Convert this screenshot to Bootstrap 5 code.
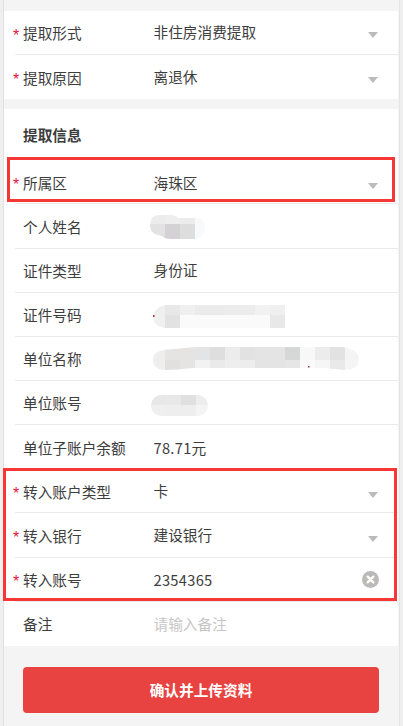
<!DOCTYPE html>
<html lang="zh-CN">
<head>
<meta charset="utf-8">
<title>提取信息</title>
<link rel="stylesheet" href="https://cdn.jsdelivr.net/npm/bootstrap@5.3.0/dist/css/bootstrap.min.css">
<style>
html, body { height: 100%; margin: 0; background: #efefef; overflow: hidden; }
body { font-family: "Noto Sans CJK SC", "Liberation Sans", sans-serif; font-size: 14.67px; color: #3d3d3d; }
.shell { width: 397px; height: 726px; margin-left: 3px; background: #f4f4f4; border-left: 1px solid #e0e0e0; border-right: 1px solid #e4e4e4; }
.panel-top { padding-top: 11px; }
.sheet { background: #fff; width: 394px; }
.sheet + .sheet { margin-top: 10px; }
.heading-row { height: 51px; padding-left: 19px; font-weight: 700; line-height: 51px; }
.field { height: 44.15px; margin-left: 11px; padding-left: 8px; border-bottom: 1px solid #e9e9e9; line-height: 1; }
.field.last-one { border-bottom: 0; }
.mark-star { width: 10px; margin-left: -10px; color: #e5133c; font-family: "Liberation Sans", sans-serif; font-size: 16px; line-height: 1; padding-top: 6px; }
.field-name { width: 130.5px; flex: none; padding-top: 2px; }
.name-low { padding-top: 4px; }
.field-value { flex: 1 1 auto; min-width: 0; }
.value-down { padding-top: 2px; }
.value-low { padding-top: 4px; }
.num-value { letter-spacing: .3px; }
.hint-value { color: #c6c6c6; }
.drop-arrow { width: 0; height: 0; margin-right: 20px; margin-top: 5px; border-left: 5px solid transparent; border-right: 5px solid transparent; border-top: 6px solid #bbb; }
.arrow-far { margin-top: 9px; }
.arrow-mid { margin-top: 8px; }
.clear-btn { width: 17px; height: 17px; margin-right: 19px; display: block; margin-top: 1px; }
.smudge { display: block; }
.smudge-name { margin-left: -4px; margin-top: 3px; }
.smudge-id { margin-left: -1px; margin-top: 4px; }
.smudge-org { margin-left: -1px; margin-top: -1px; }
.smudge-acct { margin-left: -3px; margin-top: 6px; }
.annot-wrap { position: relative; }
.annot { position: absolute; border: 3px solid #f73636; pointer-events: none; }
.annot-one { left: 3px; right: 3px; top: -3px; height: 45px; }
.annot-two { left: -1px; right: 1px; top: -1px; height: 133px; }
.foot-zone { padding: 21px 19px 0; }
.go-btn { height: 46px; width: 356px; background: #e84340; border: 0; border-radius: 4px; color: #fff; font-size: 14.67px; font-weight: 700; padding: 0; }
.go-btn:hover { background: #e84340; color: #fff; }
</style>
</head>
<body>
<div class="shell panel-top">
  <div class="sheet">
    <div class="field d-flex align-items-center">
      <span class="mark-star">*</span><span class="field-name">提取形式</span>
      <span class="field-value">非住房消费提取</span><span class="drop-arrow"></span>
    </div>
    <div class="field last-one d-flex align-items-center">
      <span class="mark-star">*</span><span class="field-name">提取原因</span>
      <span class="field-value">离退休</span><span class="drop-arrow"></span>
    </div>
  </div>
  <div class="sheet">
    <div class="heading-row">提取信息</div>
    <div class="annot-wrap">
      <div class="field d-flex align-items-center">
        <span class="mark-star">*</span><span class="field-name">所属区</span>
        <span class="field-value value-down">海珠区</span><span class="drop-arrow arrow-far"></span>
      </div>
      <div class="annot annot-one"></div>
    </div>
    <div class="field d-flex align-items-center">
      <span class="field-name">个人姓名</span>
      <span class="field-value">
        <svg class="smudge smudge-name" width="55" height="24" viewBox="0 0 55 24" aria-hidden="true">
          <defs><clipPath id="c1"><path d="M9 0H20Q26 0 28 3H45Q55 3 55 12Q55 22 45 24H22Q14 24 12 21Q0 19 0 11Q0 0 9 0Z"/></clipPath></defs>
          <g clip-path="url(#c1)">
            <rect x="0" y="0" width="15" height="9" fill="#ececec"/><rect x="15" y="0" width="15" height="9" fill="#eeeeee"/><rect x="30" y="0" width="15" height="9" fill="#ececec"/><rect x="45" y="0" width="10" height="9" fill="#f9f9fb"/>
            <rect x="0" y="9" width="15" height="15" fill="#e2e2e2"/><rect x="15" y="9" width="15" height="15" fill="#d4d2d4"/><rect x="30" y="9" width="15" height="15" fill="#dcdddc"/><rect x="45" y="9" width="10" height="15" fill="#f8f9fb"/>
          </g>
        </svg>
      </span>
    </div>
    <div class="field d-flex align-items-center">
      <span class="field-name">证件类型</span>
      <span class="field-value">身份证</span>
    </div>
    <div class="field d-flex align-items-center">
      <span class="field-name">证件号码</span>
      <span class="field-value">
        <svg class="smudge smudge-id" width="132" height="24" viewBox="0 0 132 24" aria-hidden="true">
          <defs><clipPath id="c2"><path d="M12 1H132V24H12Q0 22 0 12Q2 3 12 1Z"/></clipPath></defs>
          <g clip-path="url(#c2)">
            <rect x="0" y="0" width="12" height="11" fill="#efefef"/><rect x="12" y="0" width="15" height="11" fill="#e8e8e8"/><rect x="27" y="0" width="15" height="11" fill="#efefef"/><rect x="42" y="0" width="30" height="11" fill="#ebebeb"/><rect x="72" y="0" width="30" height="11" fill="#ececec"/><rect x="102" y="0" width="15" height="11" fill="#f2f2f2"/><rect x="117" y="0" width="15" height="11" fill="#efefef"/>
            <rect x="0" y="11" width="12" height="13" fill="#f0f0f0"/><rect x="12" y="11" width="15" height="13" fill="#e2e2e2"/><rect x="27" y="11" width="90" height="13" fill="#fafafa"/><rect x="117" y="11" width="15" height="13" fill="#e8e8e8"/>
          </g>
          <rect x="0" y="11" width="1.5" height="2" fill="#a33"/>
        </svg>
      </span>
    </div>
    <div class="field d-flex align-items-center">
      <span class="field-name">单位名称</span>
      <span class="field-value">
        <svg class="smudge smudge-org" width="206" height="24" viewBox="0 0 206 24" aria-hidden="true">
          <defs><clipPath id="c3"><path d="M10 4Q20 3 42 1H190Q206 3 206 15Q204 24 192 24L170 22H40Q24 24 10 24Q0 22 0 14Q0 6 10 4Z"/></clipPath></defs>
          <g clip-path="url(#c3)">
            <rect x="0" y="0" width="12" height="14" fill="#eeeeee"/><rect x="12" y="0" width="15" height="14" fill="#e6e4e3"/><rect x="27" y="0" width="15" height="14" fill="#e6e4e3"/><rect x="42" y="0" width="15" height="14" fill="#e3e4e6"/><rect x="57" y="0" width="15" height="14" fill="#dedede"/><rect x="72" y="0" width="15" height="14" fill="#ececec"/><rect x="87" y="0" width="15" height="14" fill="#e2e2e2"/><rect x="102" y="0" width="30" height="14" fill="#e4e4e4"/><rect x="132" y="0" width="15" height="14" fill="#d6d8d8"/><rect x="147" y="0" width="15" height="14" fill="#f8f8f8"/><rect x="162" y="0" width="15" height="14" fill="#ececec"/><rect x="177" y="0" width="15" height="14" fill="#e2e2e2"/><rect x="192" y="0" width="14" height="14" fill="#f4f4f4"/>
            <rect x="0" y="14" width="12" height="10" fill="#eeeeee"/><rect x="12" y="14" width="15" height="10" fill="#e2e0df"/><rect x="27" y="14" width="15" height="10" fill="#e6e4e3"/><rect x="42" y="14" width="15" height="10" fill="#f2f2f2"/><rect x="57" y="14" width="15" height="10" fill="#eaeaea"/><rect x="72" y="14" width="15" height="10" fill="#eeeeee"/><rect x="87" y="14" width="15" height="10" fill="#ecedec"/><rect x="102" y="14" width="30" height="10" fill="#e4e4e4"/><rect x="132" y="14" width="15" height="10" fill="#e6e6e6"/><rect x="147" y="14" width="15" height="10" fill="#fafafa"/><rect x="162" y="14" width="15" height="10" fill="#f6f6f6"/><rect x="177" y="14" width="15" height="10" fill="#e9e9e9"/><rect x="192" y="14" width="14" height="10" fill="#f5f5f5"/>
          </g>
          <rect x="155" y="20" width="1.5" height="1.5" fill="#933"/>
        </svg>
      </span>
    </div>
    <div class="field d-flex align-items-center">
      <span class="field-name">单位账号</span>
      <span class="field-value">
        <svg class="smudge smudge-acct" width="57" height="21" viewBox="0 0 57 21" aria-hidden="true">
          <defs><clipPath id="c4"><rect x="0" y="0" width="57" height="21" rx="10.5"/></clipPath></defs>
          <g clip-path="url(#c4)">
            <rect x="0" y="0" width="15" height="10" fill="#e8e6e6"/><rect x="15" y="0" width="15" height="10" fill="#e8e8e8"/><rect x="30" y="0" width="15" height="10" fill="#e0e0e0"/><rect x="45" y="0" width="12" height="10" fill="#ededed"/>
            <rect x="0" y="10" width="15" height="11" fill="#efefef"/><rect x="15" y="10" width="30" height="11" fill="#eeeeee"/><rect x="45" y="10" width="12" height="11" fill="#f4f4f4"/>
          </g>
        </svg>
      </span>
    </div>
    <div class="field d-flex align-items-center">
      <span class="field-name name-low">单位子账户余额</span>
      <span class="field-value num-value value-low">78.71元</span>
    </div>
    <div class="annot-wrap">
      <div class="field d-flex align-items-center">
        <span class="mark-star">*</span><span class="field-name">转入账户类型</span>
        <span class="field-value">卡</span><span class="drop-arrow arrow-mid"></span>
      </div>
      <div class="field d-flex align-items-center">
        <span class="mark-star">*</span><span class="field-name">转入银行</span>
        <span class="field-value">建设银行</span><span class="drop-arrow arrow-mid"></span>
      </div>
      <div class="field d-flex align-items-center">
        <span class="mark-star">*</span><span class="field-name">转入账号</span>
        <span class="field-value num-value value-down">2354365</span>
        <svg class="clear-btn" viewBox="0 0 17 17" aria-hidden="true"><circle cx="8.5" cy="8.5" r="8.5" fill="#bcb9b9"/><path d="M5.7 5.7L11.3 11.3M11.3 5.7L5.7 11.3" stroke="#fff" stroke-width="2.4" stroke-linecap="round"/></svg>
      </div>
      <div class="annot annot-two"></div>
    </div>
    <div class="field last-one d-flex align-items-center">
      <span class="field-name">备注</span>
      <span class="field-value hint-value value-down">请输入备注</span>
    </div>
  </div>
  <div class="foot-zone">
    <button type="button" class="btn go-btn d-block">确认并上传资料</button>
  </div>
</div>
<script src="https://cdn.jsdelivr.net/npm/bootstrap@5.3.0/dist/js/bootstrap.bundle.min.js"></script>
</body>
</html>
